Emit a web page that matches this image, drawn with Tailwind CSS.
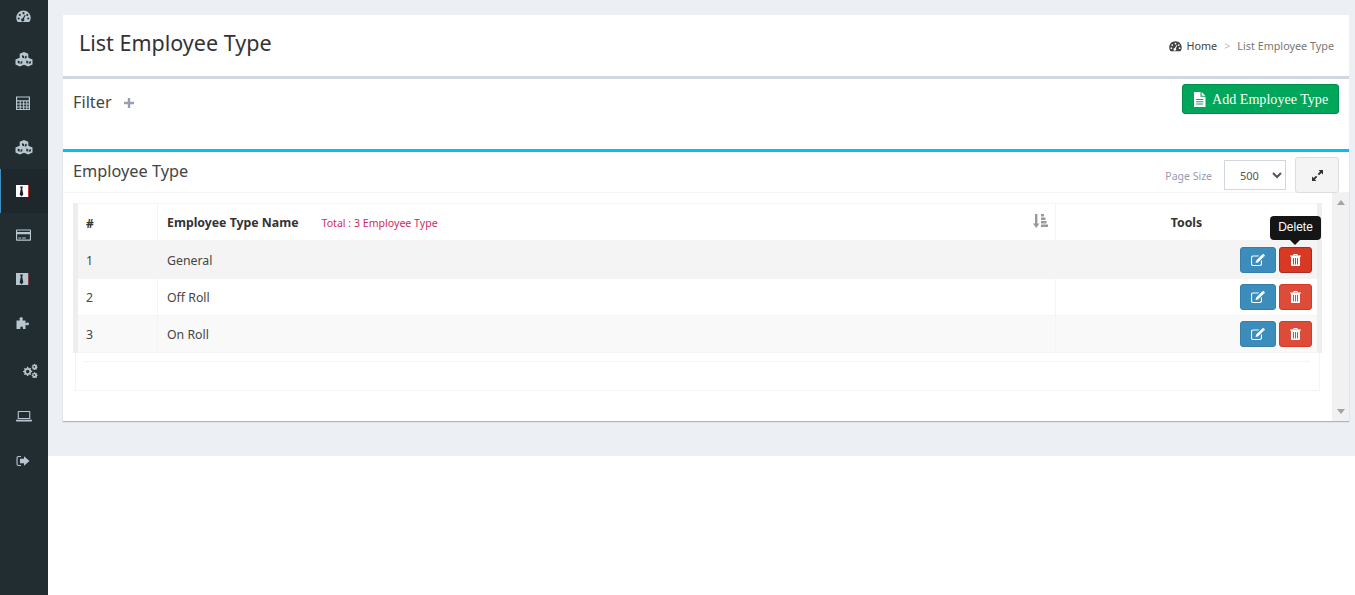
<!DOCTYPE html>
<html lang="en">
<head>
  <meta charset="UTF-8" />
  <title>List Employee Type</title>
  <script src="https://cdn.jsdelivr.net/npm/@tailwindcss/browser@4"></script>
</head>
<body class="bg-white font-['Noto_Sans',sans-serif] text-[#333] overflow-hidden">
  <svg class="hidden">
    <symbol id="i-dash" viewBox="0 0 16 16"><path fill-rule="evenodd" d="M8 1.500C3.600 1.500 0.300 5 0.300 9.200c0 1.800.6 3.300 1.400 4.300.2.200.4.300.7.300h11.200c.3 0 .5-.1.7-.3.800-1 1.400-2.500 1.400-4.300C15.700 5 12.400 1.500 8 1.500zM8 3.300a1.100 1.100 0 1 1 0 2.200 1.100 1.100 0 0 1 0-2.200zM4 5.200a1.100 1.100 0 1 1 0 2.200 1.100 1.100 0 0 1 0-2.200zM12 5.200a1.100 1.100 0 1 1 0 2.200 1.100 1.100 0 0 1 0-2.200zM2.900 9a1.100 1.100 0 1 1 0 2.200 1.100 1.100 0 0 1 0-2.200zM13.100 9a1.100 1.100 0 1 1 0 2.200 1.100 1.100 0 0 1 0-2.200zM9.300 6.200 7.200 9.800a1.700 1.700 0 1 0 1.300.6l1.700-3.800z"/></symbol>
    <symbol id="i-cubes" viewBox="0 0 18 15"><path fill-rule="evenodd" d="M9 0l4.300 1.700v4l4.200 1.700v5L13.200 14.600 9 12.800 4.800 14.600.5 12.400v-5l4.200-1.700v-4zM9 3.900 7 3.100v2.300l2 .9zM4.700 9.300 2.700 8.500v2.400l2 .9zM13.300 9.300l-2-.8v2.400l2 .9zM9.800 4.400v2.300l1.800-.8V3.600zM5.600 9.800v2.200l1.700-.8V9zM14.200 9.800v2.200l1.700-.8V9z"/></symbol>
    <symbol id="i-calc" viewBox="0 0 14 14"><path fill-rule="evenodd" d="M0 .5h14v13.500H0zM1.200 1.600v2.700h11.600V1.600zM1.200 5.500v2h2.500v-2zM4.800 5.500v2h2.300v-2zM8.200 5.500v2h2.100v-2zM11.300 5.500v2h1.500v-2zM1.200 8.500v2h2.500v-2zM4.800 8.500v2h2.300v-2zM8.200 8.500v2h2.100v-2zM11.300 8.500v2h1.500v-2zM1.200 11.500v1.400h2.500v-1.400zM4.800 11.500v1.400h2.300v-1.400zM8.200 11.500v1.400h2.100v-1.400zM11.300 11.500v1.400h1.500v-1.400z"/></symbol>
    <symbol id="i-card" viewBox="0 0 16 14"><path fill-rule="evenodd" d="M.8 1h14.400c.4 0 .8.400.8.800v10.400c0 .4-.4.800-.8.800H.8c-.4 0-.8-.4-.8-.8V1.800C0 1.400.4 1 .8 1zM1.200 2.200v1.600h13.600V2.200zM1.200 6.300v5.500h13.600V6.300zM2.400 9.600h3v1h-3zM6.300 9.600h4.200v1H6.300z"/></symbol>
    <symbol id="i-puzzle" viewBox="0 0 14 12"><path fill-rule="evenodd" d="M.5 3.500h3c.5 0 .6-.4.2-.9C3.100 1.800 3.500.300 5.200.300s2.100 1.500 1.400 2.300c-.4.500-.3.900.2.900h2.700v2.100c0 .6.400.7.900.3.800-.7 2.600-.3 2.600 1s-1.800 1.700-2.600 1c-.5-.4-.9-.3-.9.300V12H6.900v-1.100c0-.6-.5-1.300-1.300-1.300s-1.300.700-1.300 1.300V12H.5z"/></symbol>
    <symbol id="i-gears" viewBox="0 0 16 14"><path fill-rule="evenodd" d="M5.200 3.200l1 .1.300 1.200.9.400 1-.6.800.8-.6 1 .4.900 1.200.3v1.200l-1.200.3-.4.900.6 1-.8.800-1-.6-.9.400-.3 1.200H5l-.3-1.200-.9-.4-1 .6-.8-.8.6-1-.4-.9L1 8.700V7.500l1.200-.3.4-.9-.6-1 .8-.8 1 .6.9-.4.300-1.200zM5.700 6.300a1.800 1.800 0 1 0 0 3.600 1.800 1.800 0 0 0 0-3.600zM12.500.3l.6.100.2.700.6.300.7-.3.500.6-.4.600.2.600.7.300v.9l-.7.200-.2.600.4.600-.6.600-.6-.4-.6.200-.2.700h-.9l-.2-.7-.6-.2-.6.400-.6-.6.400-.6-.2-.6-.7-.2v-.9l.7-.3.2-.6-.4-.6.500-.6.700.3.600-.3.200-.7zM12.300 2.400a.9.900 0 1 0 0 1.800.9.900 0 0 0 0-1.800zM12.500 8.600l.6.100.2.700.6.300.7-.3.500.6-.4.600.2.600.7.300v.9l-.7.200-.2.600.4.600-.6.600-.6-.4-.6.200-.2.700h-.9l-.2-.7-.6-.2-.6.400-.6-.6.400-.6-.2-.6-.7-.2v-.9l.7-.3.2-.6-.4-.6.500-.6.700.3.600-.3.200-.7zM12.300 10.700a.9.900 0 1 0 0 1.800.9.900 0 0 0 0-1.800z"/></symbol>
    <symbol id="i-laptop" viewBox="0 0 16 14"><path fill-rule="evenodd" d="M2.500 2h11c.4 0 .8.400.8.800V10H1.700V2.800c0-.4.400-.8.800-.8zM2.800 3.100V9h10.400V3.100zM0 10.800h16v.6c0 .6-.5 1-1 1H1c-.5 0-1-.4-1-1z"/></symbol>
    <symbol id="i-exit" viewBox="0 0 14 14"><path d="M5 2H2.500C1.300 2 .5 2.900.5 4v6c0 1.100.8 2 2 2H5v-1.100H2.500c-.5 0-.9-.4-.9-.9V4c0-.5.4-.9.9-.9H5zM8 2.300v2.400H4v4.600h4v2.400L13.500 7z"/></symbol>
    <symbol id="i-file" viewBox="0 0 13 15"><path fill-rule="evenodd" d="M1 0h6.500v4.800H12.500V15H1zM8.600 0l3.900 3.700H8.600zM3.200 7v1h7.100V7zM3.200 9.200v1h7.100v-1zM3.200 11.400v1h7.100v-1z"/></symbol>
    <symbol id="i-edit" viewBox="0 0 14 12"><path d="M1.800 1.500h6.400L7.100 2.600H2c-.5 0-.9.400-.9.900v6.500c0 .5.400.9.900.9h7c.5 0 .9-.4.900-.9V7l1.100-1.100V10c0 1.100-.9 2-2 2H1.800C.8 12 0 11.100 0 10V3.500c0-1.100.8-2 1.800-2zM11.200.6l1.800 1.800-6 6-2.500.7.700-2.500zM11.900.1c.2-.2.500-.2.700 0l1.100 1.100c.2.200.2.500 0 .7l-.5.500-1.800-1.800z"/></symbol>
    <symbol id="i-trash" viewBox="0 0 11 12"><path fill-rule="evenodd" d="M3.800 0h3.400l.7 1.500H11v1.100H10V11c0 .6-.4 1-1 1H2c-.6 0-1-.4-1-1V2.600H0V1.500h3.100zM4.400.9l-.3.6h2.800L6.600.9zM3 4v6.500h1V4zM5 4v6.500h1V4zM7 4v6.500h1V4z"/></symbol>
    <symbol id="i-tie" viewBox="0 0 6 12"><path d="M1.500 0h3v1.500L3.800 2.500 5.200 9.500 3 12 .8 9.500 2.200 2.500 1.500 1.500z"/></symbol>
  </svg>

  <div class="flex h-[595px]">
    <!-- sidebar -->
    <nav class="w-[48px] shrink-0 bg-[#222d32] text-[#b8c7ce]">
      <a class="flex h-[38px] items-center justify-center pr-[2px]"><svg class="w-[15px] h-[15px] fill-current mt-[-6px]"><use href="#i-dash"/></svg></a>
      <a class="flex h-[43px] items-center justify-center"><svg class="w-[18px] h-[15px] fill-current"><use href="#i-cubes"/></svg></a>
      <a class="flex h-[44px] items-center justify-center pr-[2px]"><svg class="w-[14px] h-[14px] fill-current"><use href="#i-calc"/></svg></a>
      <a class="flex h-[44px] items-center justify-center"><svg class="w-[18px] h-[15px] fill-current"><use href="#i-cubes"/></svg></a>
      <a class="flex h-[44px] items-center justify-center border-l-[1px] border-[#3c8dbc] bg-[#1e282c] pr-[4px]">
        <span class="relative w-[13px] h-[12px] bg-white border-r border-[#c0392b]">
          <svg class="absolute left-[3px] top-[1px] w-[5px] h-[11px] fill-[#1a2430]"><use href="#i-tie"/></svg>
        </span>
      </a>
      <a class="flex h-[44px] items-center justify-center pr-[2px]"><svg class="w-[15px] h-[14px] fill-current"><use href="#i-card"/></svg></a>
      <a class="flex h-[44px] items-center justify-center pr-[3px]">
        <span class="relative w-[13px] h-[12px] bg-[#b8c7ce] border-r border-[#8a3a3a]">
          <svg class="absolute left-[3px] top-[1px] w-[5px] h-[11px] fill-[#1a2430]"><use href="#i-tie"/></svg>
        </span>
      </a>
      <a class="flex h-[44px] items-center justify-center pr-[2px]"><svg class="w-[14px] h-[12px] fill-current"><use href="#i-puzzle"/></svg></a>
      <a class="flex h-[47px] items-center justify-end pr-[10px] pt-[3px]"><svg class="w-[16px] h-[15px] fill-current"><use href="#i-gears"/></svg></a>
      <a class="flex h-[47px] items-center justify-center"><svg class="w-[16px] h-[14px] fill-current"><use href="#i-laptop"/></svg></a>
      <a class="flex h-[44px] items-center justify-center pr-[2px]"><svg class="w-[14px] h-[14px] fill-current"><use href="#i-exit"/></svg></a>
    </nav>

    <main class="flex-1 h-[456px] bg-[#ecf0f5] pl-[15px] pr-[6px] pt-[15px]">
      <!-- page header -->
      <div class="flex h-[64px] items-center justify-between bg-white border-b-[3px] border-[#d2d6de] pl-[16px] pr-[15px]">
        <h1 class="text-[21.5px] leading-none text-[#333] mt-[-6px]">List Employee Type</h1>
        <div class="flex items-center text-[10.8px] pt-[2px]">
          <svg class="w-[13px] h-[13px] fill-[#444] mr-[4px]"><use href="#i-dash"/></svg>
          <span class="text-[#444]">Home</span>
          <span class="text-[#bbb] mx-[7px]">&gt;</span>
          <span class="text-[#777]">List Employee Type</span>
        </div>
      </div>

      <!-- filter -->
      <div class="flex h-[70px] justify-between bg-white pl-[10px] pr-[10px] pt-[5px]">
        <div class="flex items-center h-[36px]">
          <span class="text-[16.3px] text-[#444]">Filter</span>
          <svg class="w-[10px] h-[10px] fill-[#97a0b3] ml-[12px] mt-[2px]" viewBox="0 0 10 10"><path d="M3.800 0h2.400v3.800H10v2.400H6.200V10H3.800V6.200H0V3.800h3.800z"/></svg>
        </div>
        <button class="flex items-center h-[30px] w-[157px] bg-[#00a65a] border border-[#008d4c] rounded-[3px] pl-[10px] text-white font-['Liberation_Serif',serif] text-[14.1px]">
          <svg class="w-[13px] h-[15px] fill-white mr-[6px]"><use href="#i-file"/></svg>
          <span class="pt-[2px]">Add Employee Type</span>
        </button>
      </div>

      <!-- list box -->
      <div class="bg-white border-t-[3px] border-[#00c0ef] shadow-[0_1px_1px_rgba(0,0,0,0.25)]">
        <div class="flex h-[41px] justify-between border-b border-[#f4f4f4] pl-[10px] pr-[10px]">
          <h3 class="text-[16.3px] text-[#444] mt-[6px] leading-[26px]">Employee Type</h3>
          <div class="flex items-start pt-[5px]">
            <span class="text-[10.5px] text-[#9a9ab0] mr-[12px] mt-[12px]">Page Size</span>
            <select class="w-[62px] h-[30px] mt-[3px] border border-[#d2d6de] bg-white text-[11px] text-[#555] pl-[11px]"><option>500</option></select>
            <button class="flex items-center justify-center w-[44px] h-[36px] ml-[9px] bg-[#f4f4f4] border border-[#ddd] rounded-[3px]">
              <svg class="w-[11px] h-[11px] fill-[#333]" viewBox="0 0 11 11"><path d="M6.500 0H11v4.500L9.400 2.900 7 5.300 5.700 4 8.100 1.600zM4.500 11H0V6.500l1.600 1.600L4 5.700 5.300 7 2.900 9.400z"/></svg>
            </button>
          </div>
        </div>

        <div class="flex h-[228px]">
          <div class="flex-1 pl-[10px] pt-[10px]">
            <div class="relative h-[188px] w-[1249px]">
              <div class="absolute left-[2px] right-[2px] top-0 bottom-0 border border-[#f4f4f4]"></div>
              <div class="relative border-x-[5px] border-[#eee] text-[12.3px] text-[#444]">
                <div class="grid grid-cols-[80px_898px_261px] h-[37px] bg-white border-t border-[#f4f4f4] items-stretch">
                  <div class="flex items-center pl-[8px] pt-[3px] font-bold text-[#333] text-[12px] border-r border-[#f4f4f4]">#</div>
                  <div class="flex items-center pl-[9px] pr-[7px] border-r border-[#f4f4f4]">
                    <span class="font-bold text-[12.3px] text-[#333] pt-[3px]">Employee Type Name</span>
                    <span class="ml-[23px] text-[10.6px] text-[#d02a62] pt-[3px]">Total : 3 Employee Type</span>
                    <svg class="ml-auto w-[15px] h-[14px] fill-[#999] mt-[-2px]" viewBox="0 0 15 14"><path d="M2 0h2.400v9.500H6.500L3.200 14 0 9.500h2zM8 0h3v2.500H8zM8 3.500h4.500V6H8zM8 7h5.500v2.500H8zM8 10.500h7V13H8z"/></svg>
                  </div>
                  <div class="flex items-center justify-center font-bold text-[12.3px] text-[#333] pt-[3px]">Tools</div>
                </div>
                <div class="grid grid-cols-[80px_898px_261px] h-[39px] bg-[#f4f4f4]">
                  <div class="flex items-center pl-[8px] pt-[4px] border-r border-[#f4f4f4]">1</div>
                  <div class="flex items-center pl-[9px] pt-[4px] border-r border-[#f4f4f4]">General</div>
                  <div class="flex items-center justify-end gap-[3px] pr-[5px]">
                    <button class="flex items-center justify-center w-[36px] h-[26px] bg-[#3c8dbc] border border-[#367fa9] rounded-[3px]"><svg class="w-[14px] h-[12px] fill-white"><use href="#i-edit"/></svg></button>
                    <span class="relative">
                      <button class="flex items-center justify-center w-[33px] h-[26px] bg-[#d73925] border border-[#ac2925] rounded-[3px]"><svg class="w-[11px] h-[12px] fill-white"><use href="#i-trash"/></svg></button>
                      <span class="absolute left-[-9px] top-[-31px] flex items-center justify-center w-[51px] h-[24px] pb-[2px] rounded-[4px] bg-[#151515] font-['Liberation_Sans',sans-serif] text-[12px] text-white">Delete</span>
                      <span class="absolute left-[11px] top-[-7px] w-0 h-0 border-x-[5px] border-t-[5px] border-x-transparent border-t-[#151515]"></span>
                    </span>
                  </div>
                </div>
                <div class="grid grid-cols-[80px_898px_261px] h-[36px] bg-white">
                  <div class="flex items-center pl-[8px] pt-[3px] border-r border-[#f4f4f4]">2</div>
                  <div class="flex items-center pl-[9px] pt-[3px] border-r border-[#f4f4f4]">Off Roll</div>
                  <div class="flex items-center justify-end gap-[3px] pr-[5px]">
                    <button class="flex items-center justify-center w-[36px] h-[26px] bg-[#3c8dbc] border border-[#367fa9] rounded-[3px]"><svg class="w-[14px] h-[12px] fill-white"><use href="#i-edit"/></svg></button>
                    <button class="flex items-center justify-center w-[33px] h-[26px] bg-[#dd4b39] border border-[#d73925] rounded-[3px]"><svg class="w-[11px] h-[12px] fill-white"><use href="#i-trash"/></svg></button>
                  </div>
                </div>
                <div class="grid grid-cols-[80px_898px_261px] h-[38px] bg-[#f9f9f9] border-y border-[#f4f4f4]">
                  <div class="flex items-center pl-[8px] pt-[3px] border-r border-[#f4f4f4]">3</div>
                  <div class="flex items-center pl-[9px] pt-[3px] border-r border-[#f4f4f4]">On Roll</div>
                  <div class="flex items-center justify-end gap-[3px] pr-[5px]">
                    <button class="flex items-center justify-center w-[36px] h-[26px] bg-[#3c8dbc] border border-[#367fa9] rounded-[3px]"><svg class="w-[14px] h-[12px] fill-white"><use href="#i-edit"/></svg></button>
                    <button class="flex items-center justify-center w-[33px] h-[26px] bg-[#dd4b39] border border-[#d73925] rounded-[3px]"><svg class="w-[11px] h-[12px] fill-white"><use href="#i-trash"/></svg></button>
                  </div>
                </div>
              </div>
              <div class="relative h-px mt-[8px] ml-[11px] mr-[12px] bg-[#f4f4f4]"></div>
            </div>
          </div>
          <!-- scrollbar -->
          <div class="flex w-[17px] flex-col items-center justify-between bg-[#f1f1f1] py-[7px]">
            <span class="w-0 h-0 border-x-[4px] border-b-[5px] border-x-transparent border-b-[#a3a3a3]"></span>
            <span class="w-0 h-0 border-x-[4px] border-t-[5px] border-x-transparent border-t-[#a3a3a3]"></span>
          </div>
        </div>
      </div>
    </main>
  </div>
</body>
</html>
